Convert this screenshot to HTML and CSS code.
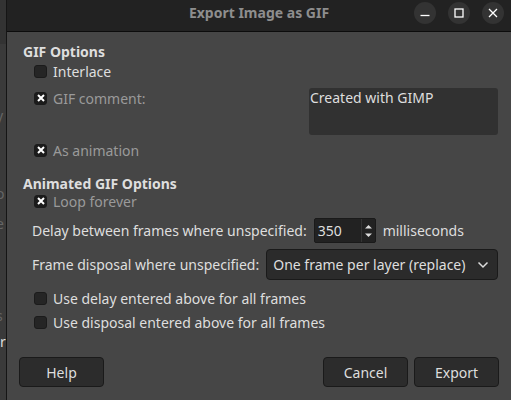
FILE: index.html
```html
<!DOCTYPE html>
<html>
<head>
<meta charset="utf-8">
<link rel="stylesheet" href="styles.css">
</head>
<body>
<div class="screen">
  <div class="behind">
    <div class="behind-top"></div>
    <div class="behind-mid"><span class="ghost g1">y</span><span class="ghost g2">o</span><span class="ghost g3">e</span><span class="ghost g4">s</span><span class="ghost g5">er</span></div>
  </div>
  <div class="dialog">
    <div class="titlebar">
      <div class="title">Export Image as GIF</div>
      <div class="wbtns">
        <span class="wbtn"><svg width="12" height="12" viewBox="0 0 12 12"><path d="M1.5 8.5h9" stroke="#fff" stroke-width="1.3"/></svg></span>
        <span class="wbtn"><svg width="12" height="12" viewBox="0 0 12 12"><rect x="2" y="2" width="8" height="8" fill="none" stroke="#fff" stroke-width="1.3"/></svg></span>
        <span class="wbtn"><svg width="12" height="12" viewBox="0 0 12 12"><path d="M2 2l8 8M10 2l-8 8" stroke="#fff" stroke-width="1.3"/></svg></span>
      </div>
    </div>
    <div class="content">
      <div class="heading h1">GIF Options</div>
      <div class="check r-interlace"><span class="box"></span><span class="lbl">Interlace</span></div>
      <div class="comment-row">
        <div class="check r-comment"><span class="box on"><svg width="8" height="8" viewBox="0 0 8 8"><path d="M1 1l6 6M7 1l-6 6" stroke="#fff" stroke-width="2"/></svg></span><span class="lbl dim">GIF comment:</span></div>
        <div class="textarea">Created with GIMP</div>
      </div>
      <div class="check r-anim"><span class="box on"><svg width="8" height="8" viewBox="0 0 8 8"><path d="M1 1l6 6M7 1l-6 6" stroke="#fff" stroke-width="2"/></svg></span><span class="lbl dim">As animation</span></div>
      <div class="heading h2">Animated GIF Options</div>
      <div class="check r-loop"><span class="box on"><svg width="8" height="8" viewBox="0 0 8 8"><path d="M1 1l6 6M7 1l-6 6" stroke="#fff" stroke-width="2"/></svg></span><span class="lbl dim">Loop forever</span></div>
      <div class="field r-delay">
        <span class="flbl">Delay between frames where unspecified:</span>
        <div class="spin"><span class="spin-val">350</span><span class="spin-arrows"><svg width="9" height="18" viewBox="0 0 9 18"><path d="M1 6.5l3.5-3.5 3.5 3.5z" fill="#ddd"/><path d="M1 11.5l3.5 3.5 3.5-3.5z" fill="#ddd"/></svg></span></div>
        <span class="flbl">milliseconds</span>
      </div>
      <div class="field r-disp">
        <span class="flbl">Frame disposal where unspecified:</span>
        <div class="combo"><span>One frame per layer (replace)</span><svg width="12" height="8" viewBox="0 0 12 8"><path d="M1.5 1.5l4.5 4.5 4.5-4.5" fill="none" stroke="#ddd" stroke-width="1.5"/></svg></div>
      </div>
      <div class="check r-usedelay"><span class="box"></span><span class="lbl">Use delay entered above for all frames</span></div>
      <div class="check r-usedisp"><span class="box"></span><span class="lbl">Use disposal entered above for all frames</span></div>
      <div class="actions">
        <button class="btn">Help</button>
        <div class="spacer"></div>
        <button class="btn">Cancel</button>
        <button class="btn">Export</button>
      </div>
    </div>
  </div>
</div>
</body>
</html>
```
FILE: styles.css
```css
* { box-sizing: border-box; }
html, body { margin: 0; padding: 0; }
body {
  width: 511px;
  height: 400px;
  overflow: hidden;
  background: #2b2b2b;
  font-family: "Noto Sans", "DejaVu Sans", sans-serif;
  font-size: 14px;
  color: #dedede;
}
.screen { display: flex; height: 400px; }
.behind {
  width: 6px;
  display: flex;
  flex-direction: column;
  background: #2a2a2a;
  overflow: hidden;
}
.behind-top { height: 44px; background: #333; }
.behind-mid { flex: 1; position: relative; background: #3a3a3a; }
.ghost { position: absolute; left: -4px; color: #666; font-size: 14px; }
.g1 { top: 62px; }
.g2 { top: 140px; }
.g3 { top: 170px; }
.g4 { top: 262px; }
.g5 { top: 288px; left: -8px; color: #ddd; }
.dialog {
  flex: 1;
  display: flex;
  flex-direction: column;
  border-left: 1px solid #151515;
  background: #464646;
}
.titlebar {
  height: 32px;
  flex: none;
  background: #222222;
  border-bottom: 1px solid #0c0c0c;
  display: flex;
  align-items: center;
  position: relative;
}
.title {
  position: absolute;
  left: 0; right: 0;
  top: 3px;
  text-align: center;
  font-weight: bold;
  color: #8e8e8e;
  font-size: 14px;
}
.wbtns { margin-left: auto; display: flex; gap: 12px; margin-right: 7px; margin-top: -5px; }
.wbtn {
  width: 22px; height: 22px; border-radius: 50%;
  background: #333;
  display: flex; align-items: center; justify-content: center;
}
.content {
  flex: 1;
  display: flex;
  flex-direction: column;
  padding: 0 12px 0 16px;
}
.heading { font-weight: bold; color: #dedede; height: 20px; line-height: 20px; }
.h1 { margin-top: 10px; }
.h2 { margin-top: 14px; }
.check { display: flex; align-items: center; height: 26px; padding-left: 11px; }
.box {
  width: 13px; height: 13px; border-radius: 3px;
  background: #252525; border: 1px solid #1b1b1b;
  margin-right: 6px;
  display: flex; align-items: center; justify-content: center;
  flex: none;
}
.box.on { background: #1b1b1b; }
.lbl { color: #dedede; }
.lbl.dim { color: #9a9a9a; }
.r-interlace { height: 20px; margin-top: -1px; }
.comment-row { display: flex; align-items: flex-start; height: 52px; margin-top: 7px; }
.r-comment { height: 20px; }
.textarea {
  margin-left: auto;
  margin-right: 1px;
  width: 189px; height: 47px;
  background: #313131;
  border-radius: 3px;
  color: #dedede;
  padding: 0 1px;
  line-height: 20px;
}
.r-anim { height: 20px; margin-top: 0; }
.r-loop { height: 20px; margin-top: -3px; }
.field { display: flex; align-items: center; padding-left: 9px; gap: 7px; }
.r-delay { height: 27px; margin-top: 6px; }
.r-disp { height: 31px; margin-top: 5px; gap: 7px; }
.flbl { color: #dedede; white-space: nowrap; }
.spin {
  width: 62px; height: 25px;
  background: #222;
  border: 1px solid #1a1a1a;
  display: flex; align-items: center;
  border-radius: 2px;
}
.spin-val { flex: 1; padding-left: 3px; color: #dedede; }
.spin-arrows {
  width: 14px; height: 23px;
  border-left: 1px solid #353535;
  display: flex; align-items: center; justify-content: center;
}
.combo {
  flex: 1;
  margin-right: 1px;
  height: 31px;
  background: #2b2b2b;
  border: 1px solid #1a1a1a;
  border-radius: 4px;
  display: flex; align-items: center; justify-content: space-between;
  padding: 0 8px 0 6px;
  color: #dedede;
}
.r-usedelay { margin-top: 5px; }
.r-usedisp { margin-top: -2px; }
.actions { display: flex; gap: 6px; margin-top: 22px; margin-left: -4px; }
.spacer { flex: 1; }
.btn {
  width: 85px; height: 30px;
  background: #2c2c2c;
  border: 1px solid #1a1a1a;
  border-radius: 4px;
  color: #dedede;
  font-family: inherit;
  font-size: 14px;
  padding: 0;
}
```
